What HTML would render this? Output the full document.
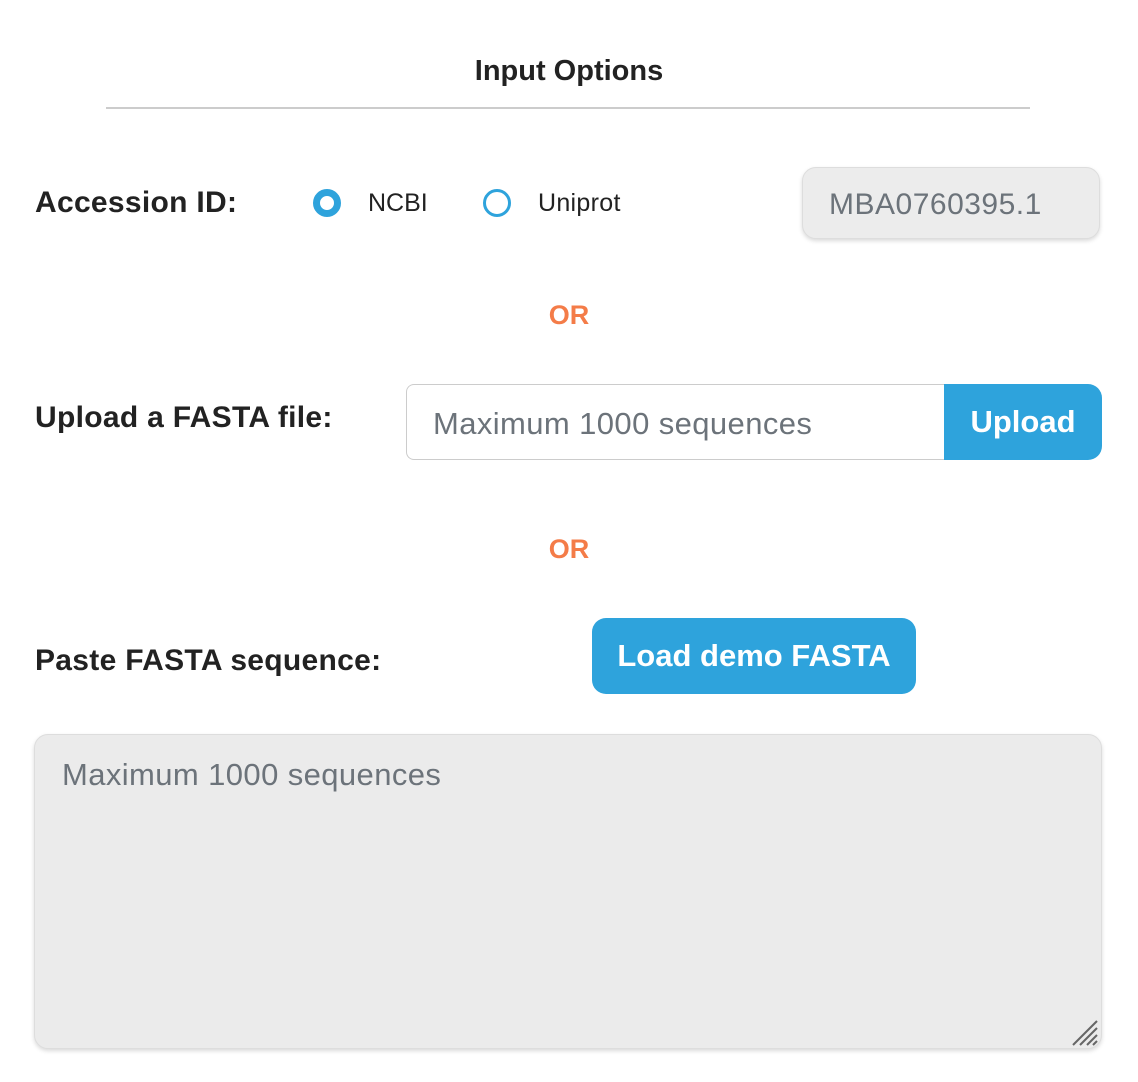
<!DOCTYPE html>
<html><head><style>
body{margin:0;width:1138px;height:1082px;background:#fff;font-family:"Liberation Sans",sans-serif;position:relative;overflow:hidden}
.a{position:absolute}
.lbl{font-weight:bold;font-size:30px;color:#222;letter-spacing:0.3px}
.or{font-weight:bold;font-size:27px;color:#f47c48;left:0;width:1138px;text-align:center}
.btn{background:#2ea3dc;color:#fff;font-size:31px;font-weight:bold;display:flex;align-items:center;justify-content:center}
</style></head><body>
<div class="a" style="left:0;width:1138px;top:55px;text-align:center;font-weight:bold;font-size:29px;color:#222">Input Options</div>
<div class="a" style="left:106px;top:107px;width:924px;height:2px;background:#ccc"></div>
<div class="a lbl" style="left:35px;top:186px">Accession ID:</div>
<div class="a" style="left:313px;top:189px;border-radius:50%;border:7px solid #2ea3dc;box-sizing:content-box;width:0;height:0;padding:7px;background:#fff;"></div>
<div class="a" style="left:368px;top:189px;font-size:25px;color:#222">NCBI</div>
<div class="a" style="left:483px;top:189px;width:22px;height:22px;border-radius:50%;border:3px solid #2ea3dc"></div>
<div class="a" style="left:538px;top:189px;font-size:25px;color:#222;letter-spacing:0.3px">Uniprot</div>
<div class="a" style="left:802px;top:167px;width:298px;height:72px;box-sizing:border-box;border:1px solid #ddd;border-radius:14px;background:#ececec;box-shadow:0 2px 4px rgba(0,0,0,.15);font-size:30px;color:#6c737a;padding:20px 0 0 26px;letter-spacing:0.5px">MBA0760395.1</div>
<div class="a or" style="top:300px">OR</div>
<div class="a lbl" style="left:35px;top:401px">Upload a FASTA file:</div>
<div class="a" style="left:406px;top:384px;width:540px;height:76px;box-sizing:border-box;border:1px solid #ccc;border-right:none;border-radius:8px 0 0 8px;font-size:31px;color:#6c737a;padding:21px 0 0 26px;letter-spacing:0.4px">Maximum 1000 sequences</div>
<div class="a btn" style="left:944px;top:384px;width:158px;height:76px;border-radius:0 14px 14px 0">Upload</div>
<div class="a or" style="top:534px">OR</div>
<div class="a lbl" style="left:35px;top:644px">Paste FASTA sequence:</div>
<div class="a btn" style="left:592px;top:618px;width:324px;height:76px;border-radius:14px">Load demo FASTA</div>
<div class="a" style="left:34px;top:734px;width:1068px;height:315px;box-sizing:border-box;border:1px solid #ddd;border-radius:14px;background:#ebebeb;box-shadow:0 2px 4px rgba(0,0,0,.15);font-size:31px;color:#6c737a;padding:22px 0 0 27px;letter-spacing:0.4px">Maximum 1000 sequences</div>
<svg class="a" style="left:1070px;top:1018px" width="30" height="30"><g stroke="#666" stroke-width="2"><line x1="3" y1="27" x2="27" y2="3"/><line x1="10" y1="27" x2="27" y2="10"/><line x1="17" y1="27" x2="27" y2="17"/><line x1="23" y1="27" x2="27" y2="23"/></g></svg>
</body></html>
